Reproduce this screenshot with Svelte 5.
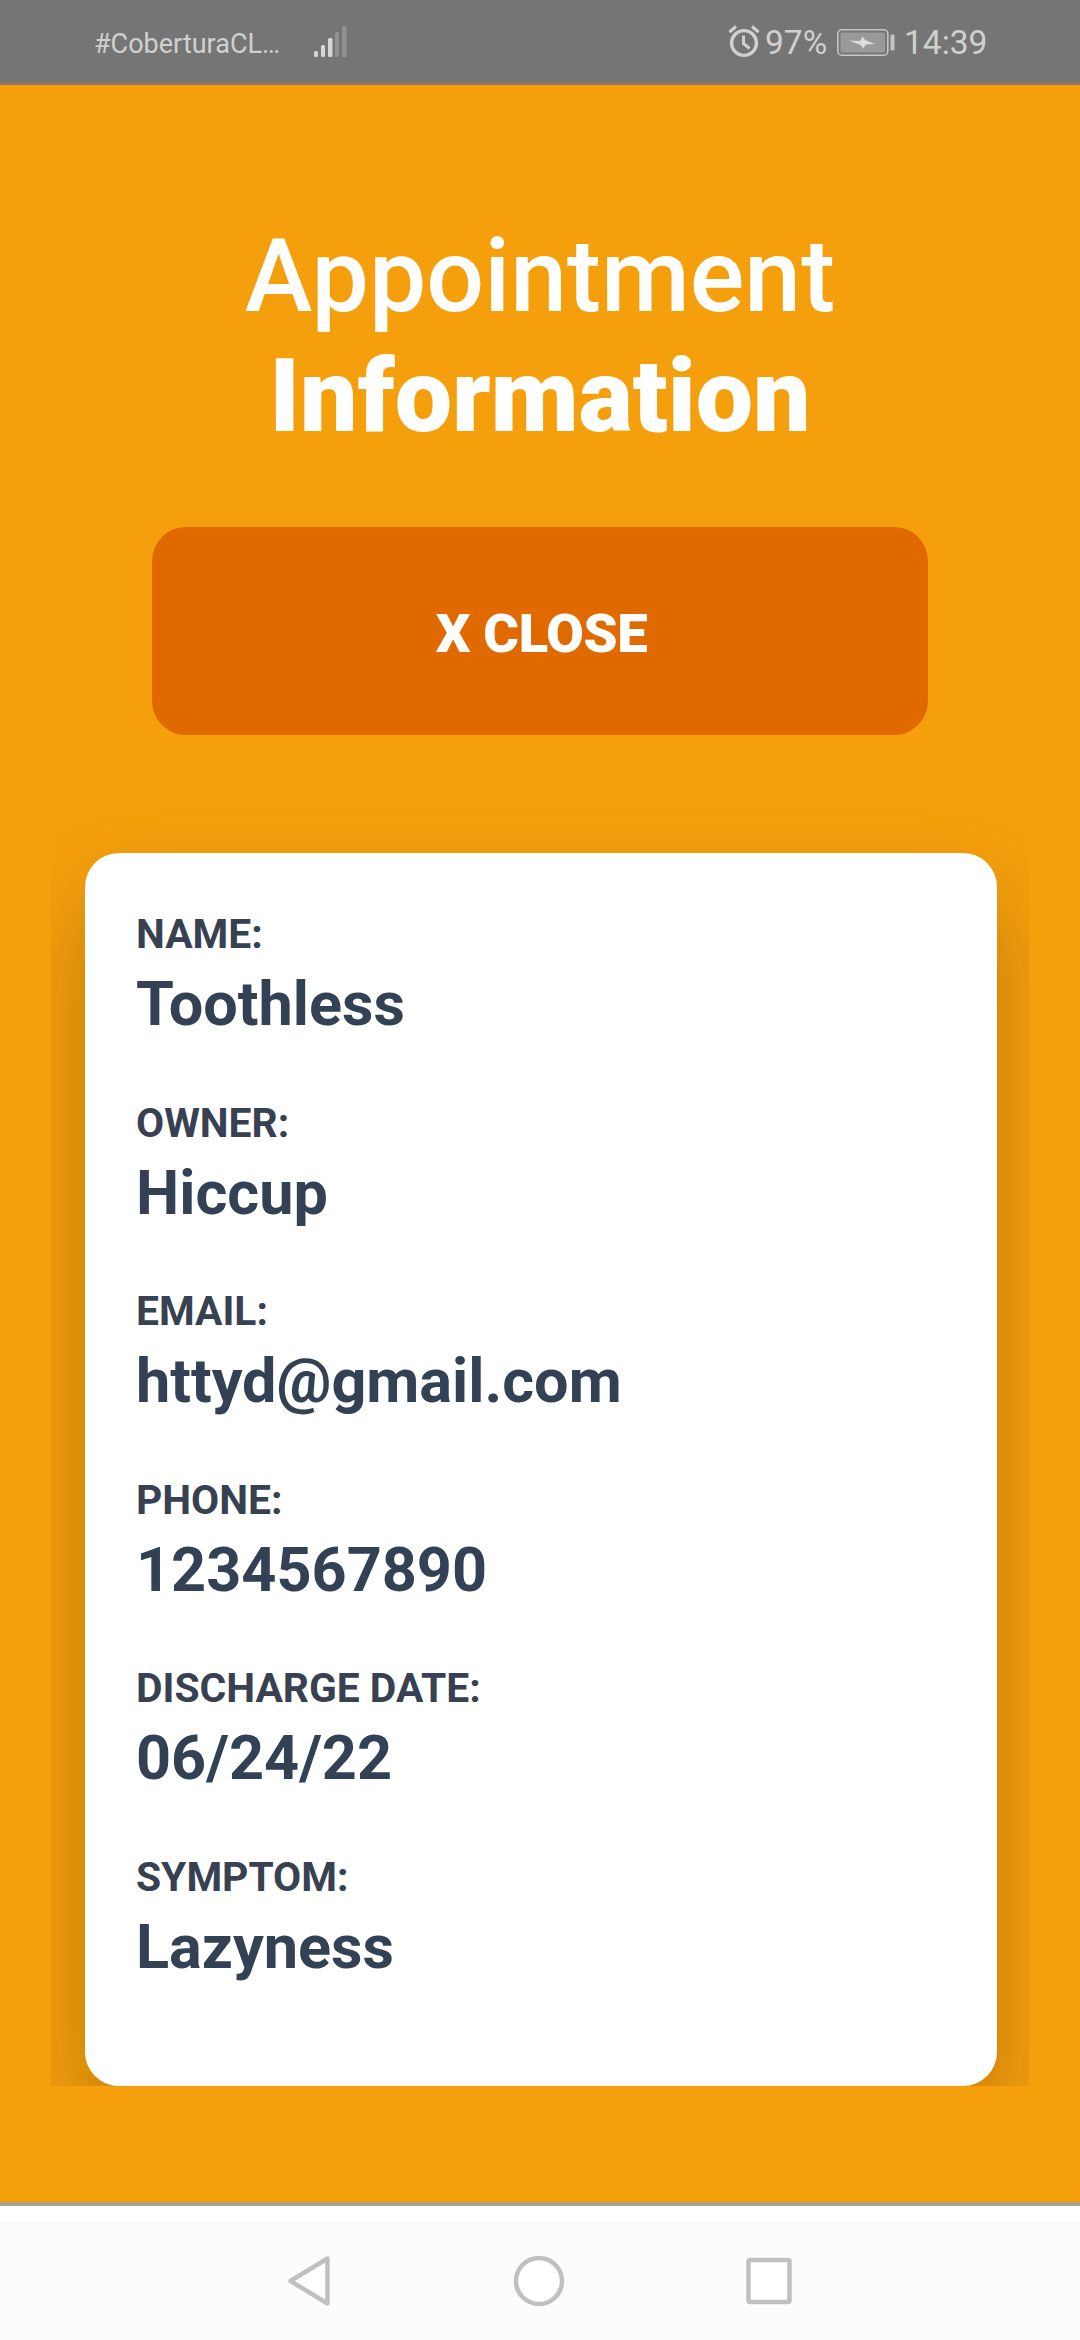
<script>
  const fields = [
    { label: 'NAME:', value: 'Toothless' },
    { label: 'OWNER:', value: 'Hiccup' },
    { label: 'EMAIL:', value: 'httyd@gmail.com' },
    { label: 'PHONE:', value: '1234567890' },
    { label: 'DISCHARGE DATE:', value: '06/24/22' },
    { label: 'SYMPTOM:', value: 'Lazyness' }
  ];
</script>

<div class="screen">
  <header class="status">
    <span class="carrier">#CoberturaCL…</span>
    <svg class="signal" width="34" height="32" viewBox="0 0 34 32">
      <rect x="0" y="25" width="4" height="6" rx="1.5" fill="#d6d6d6" />
      <rect x="7" y="19" width="4" height="12" rx="1.5" fill="#d6d6d6" />
      <rect x="14" y="12" width="4.5" height="19" rx="1.5" fill="#d6d6d6" />
      <rect x="21" y="6" width="4" height="25" rx="1.5" fill="#929292" />
      <rect x="28" y="0" width="4.5" height="31" rx="1.5" fill="#929292" />
    </svg>
    <svg class="alarm" width="32" height="34" viewBox="0 0 32 34" fill="none" stroke="#d0d0d0">
      <circle cx="16" cy="19" r="12.4" stroke-width="3.4" />
      <path d="M1.5 8 8 2.5M30.500 8 24 2.500" stroke-width="3.2" />
      <path d="M15.500 11.500V19.500L21.500 24.500" stroke-width="3" />
    </svg>
    <span class="percent">97%</span>
    <svg class="battery" width="58" height="28" viewBox="0 0 58 28">
      <rect x="0.8" y="0.8" width="50" height="25.400" rx="4" fill="none" stroke="#c6c6c6" stroke-width="1.6" />
      <rect x="3.500" y="3.500" width="44.600" height="20" rx="1.500" fill="#999" />
      <path d="M12 11.500 23 12 25.500 7.500 28 11 38 15 28.500 15.500 26.500 19.500 23.500 16Z" fill="#dedede" />
      <rect x="53.500" y="5.500" width="4" height="16" rx="1" fill="#c6c6c6" />
    </svg>
    <span class="clock">14:39</span>
  </header>

  <main>
    <h1>Appointment<b>Information</b></h1>
    <button>X CLOSE</button>
    <div class="shade">
      <section class="card">
        {#each fields as f}
          <div class="field">
            <span class="label">{f.label}</span>
            <span class="value">{f.value}</span>
          </div>
        {/each}
      </section>
    </div>
  </main>

  <nav>
    <svg width="44" height="52" viewBox="0 0 44 52"><path d="M40.500 3.500V48.500L3.500 26Z" /></svg>
    <svg width="52" height="52" viewBox="0 0 52 52"><circle cx="26" cy="26" r="23" /></svg>
    <svg width="46" height="52" viewBox="0 0 46 52"><rect x="2.500" y="5" width="41" height="42" rx="1.500" /></svg>
  </nav>
</div>

<style>
  :global(body) {
    margin: 0;
  }
  .screen {
    width: 1080px;
    height: 2340px;
    display: flex;
    flex-direction: column;
    overflow: hidden;
    background: #f59f0d;
    font-family: Roboto, 'Liberation Sans', sans-serif;
  }
  .status {
    box-sizing: border-box;
    height: 85px;
    display: flex;
    align-items: flex-start;
    padding: 0 0 0 94px;
    background: #757575;
    border-bottom: 2px solid #9a7653;
    color: #d0d0d0;
    white-space: nowrap;
  }
  .status span {
    flex: none;
    font-size: 33.5px;
    line-height: 40px;
    margin-top: 23px;
  }
  .status svg {
    flex: none;
  }
  .status .carrier {
    width: 220px;
    font-size: 27px;
    line-height: 42px;
  }
  .signal {
    margin-top: 26px;
  }
  .alarm {
    margin: 24px 0 0 380px;
  }
  .status .percent {
    width: 72px;
    margin-left: 5px;
  }
  .battery {
    margin-top: 29px;
  }
  .status .clock {
    margin-left: 9px;
  }
  main {
    height: 2117px;
    flex: none;
    display: flex;
    flex-direction: column;
    align-items: center;
  }
  h1 {
    margin: 131px 0 0;
    color: #fff;
    font-size: 102px;
    line-height: 120px;
    font-weight: 500;
    text-align: center;
  }
  h1 b {
    display: block;
    font-weight: 900;
  }
  button {
    width: 776px;
    height: 208px;
    flex: none;
    margin-top: 71px;
    padding: 6px 0 0 3px;
    border: 0;
    border-radius: 34px;
    background: #e06900;
    color: #fff;
    font: 900 54.4px/64px Roboto, 'Liberation Sans', sans-serif;
    letter-spacing: -0.3px;
  }
  /* Crops the card's shadow at the sides and at its lower edge */
  .shade {
    box-sizing: border-box;
    width: 978px;
    height: 1351px;
    flex: none;
    padding: 118px 32px 0 34px;
    overflow: hidden;
  }
  .card {
    box-sizing: border-box;
    height: 1233px;
    display: flex;
    flex-direction: column;
    gap: 58px;
    padding: 57px 51px 0;
    border-radius: 34px;
    background: #fff;
    box-shadow: 0 46px 90px rgba(0, 0, 0, 0.22);
  }
  .field {
    display: flex;
    flex-direction: column;
    gap: 10px;
  }
  .label {
    font-size: 40.8px;
    line-height: 48px;
    font-weight: 700;
    color: #374151;
  }
  .value {
    font-size: 61.2px;
    line-height: 72.5px;
    font-weight: 700;
    color: #334155;
  }
  nav {
    box-sizing: border-box;
    height: 138px;
    flex: none;
    display: flex;
    justify-content: space-between;
    padding: 49px 288px 0 287px;
    border-top: 4px solid #a7a491;
    background: linear-gradient(#fff 16px, #fcfcfc 16px);
  }
  nav svg {
    fill: #fff;
    stroke: #c0c0c0;
    stroke-width: 4.5px;
    stroke-linejoin: round;
  }
</style>
